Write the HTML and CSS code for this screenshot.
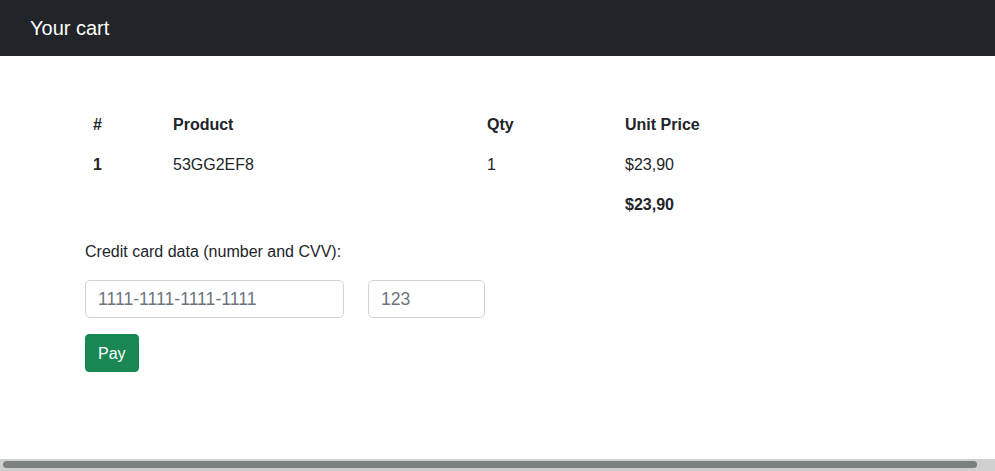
FILE: index.html
```html
<!DOCTYPE html>
<html lang="en">
<head>
<meta charset="utf-8">
<title>Your cart</title>
<link rel="stylesheet" href="styles.css">
</head>
<body>
<nav class="navbar">
  <span class="brand">Your cart</span>
</nav>
<main class="content">
  <table class="cart">
    <colgroup>
      <col class="c-num"><col class="c-prod"><col class="c-qty"><col class="c-price">
    </colgroup>
    <thead>
      <tr><th>#</th><th>Product</th><th>Qty</th><th>Unit Price</th></tr>
    </thead>
    <tbody>
      <tr><th>1</th><td>53GG2EF8</td><td>1</td><td>$23,90</td></tr>
      <tr><td></td><td></td><td></td><th>$23,90</th></tr>
    </tbody>
  </table>
  <form class="pay-form">
    <label class="label" for="cc">Credit card data (number and CVV):</label>
    <div class="inputs">
      <input id="cc" class="input input-cc" type="text" placeholder="1111-1111-1111-1111">
      <input class="input input-cvv" type="text" placeholder="123">
    </div>
    <button type="button" class="btn">Pay</button>
  </form>
</main>
<div class="hscroll" aria-hidden="true"><div class="hscroll-thumb"></div></div>
</body>
</html>
```
FILE: styles.css
```css
* { box-sizing: border-box; }
html, body { margin: 0; padding: 0; }
body {
  font-family: "Liberation Sans", Arial, sans-serif;
  font-size: 16px;
  line-height: 1.5;
  color: #212529;
  background: #fff;
  overflow: hidden;
}
.navbar {
  background: #212529;
  height: 56px;
  display: flex;
  align-items: center;
  padding-left: 30px;
}
.brand {
  color: #fff;
  font-size: 20px;
  line-height: 30px;
}
.content {
  padding: 49px 0 0 85px;
}
.cart {
  border-collapse: collapse;
  table-layout: fixed;
  width: 825px;
  margin-bottom: 15px;
}
.c-num { width: 80px; }
.c-prod { width: 314px; }
.c-qty { width: 138px; }
.cart th, .cart td {
  padding: 8px;
  height: 40px;
  text-align: left;
  vertical-align: top;
}
.cart th { font-weight: bold; }
.pay-form { display: flex; flex-direction: column; align-items: flex-start; }
.label { display: block; margin-bottom: 16px; }
.inputs { display: flex; gap: 24px; margin-bottom: 16px; }
.input {
  height: 38px;
  padding: 6px 12px;
  font-family: "Liberation Sans", Arial, sans-serif;
  font-size: 17.6px;
  line-height: 24px;
  color: #212529;
  border: 1px solid #ced4da;
  border-radius: 5px;
  background: #fff;
}
.input::placeholder { color: #6c757d; }
.input-cc { width: 259px; }
.input-cvv { width: 117px; }
.btn {
  height: 38px;
  padding: 7px 12px 5px;
  font-family: "Liberation Sans", Arial, sans-serif;
  font-size: 16px;
  line-height: 24px;
  color: #fff;
  background: #198754;
  border: 1px solid #198754;
  border-radius: 4px;
}
.hscroll {
  position: fixed;
  left: 0;
  right: 0;
  bottom: 0;
  height: 12px;
  background: #cfcfcf;
  padding: 2px 18px 0 3px;
}
.hscroll-thumb {
  height: 7px;
  border-radius: 4px;
  background: #7c807f;
}
```
